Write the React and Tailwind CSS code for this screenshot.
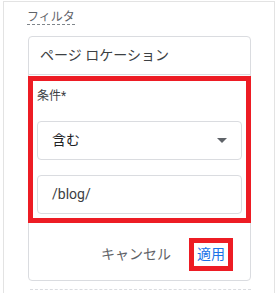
import React from 'react';

const font = { fontFamily: 'Roboto, "Noto Sans CJK JP", sans-serif' };

export default function App() {
  return (
    <div className="w-[277px] h-[293px] overflow-hidden bg-white pt-px" style={font}>
      <div className="ml-[3px] w-[272px] h-[300px] border-l border-r border-t border-[#e3e3e3]">
        <div className="pt-[8px] pl-[23px] flex">
          <span className="block text-[12px] leading-[14px] text-[#5f6368] border-b border-dashed border-[#80868b]">
            フィルタ
          </span>
        </div>

        <div className="mt-[11px] ml-[24px] w-[223px] border border-[#dadce0] rounded-[4px]">
          <div className="h-[38px] flex items-center pl-[11px] border-b border-[#dadce0] text-[14px] text-[#3c4043]">
            ページ ロケーション
          </div>

          <div className="mt-px -mx-px border-[5px] border-[#ed1c24] px-[4px] pb-[4px]">
            <div className="pt-[7px] text-[12px] leading-[16px] text-[#3c4043]">条件*</div>
            <div className="mt-[17px] h-[39px] border border-[#dadce0] rounded-[4px] flex items-center justify-between pl-[14px] pr-[14px]">
              <span className="text-[14px] text-[#202124]">含む</span>
              <svg width="10" height="5" viewBox="0 0 10 5">
                <polygon points="0,0 10,0 5,5" fill="#5f6368" />
              </svg>
            </div>
            <div className="mt-[15px] h-[39px] border border-[#dadce0] rounded-[4px] flex items-center pl-[14px]">
              <span className="text-[14px] text-[#3c4043]">/blog/</span>
            </div>
          </div>

          <div className="flex items-center justify-end pt-[15px] pb-[9px] pr-[17px] gap-[18px]">
            <span className="text-[14px] text-[#5f6368]">キャンセル</span>
            <span className="border-[5px] border-[#ed1c24] px-[3px] h-[33px] flex items-center text-[14px] text-[#1a73e8]">
              適用
            </span>
          </div>
        </div>

        <div className="mt-[8px] ml-[26px] w-[221px] border-t border-dashed border-[#dadce0]" />
      </div>
    </div>
  );
}
